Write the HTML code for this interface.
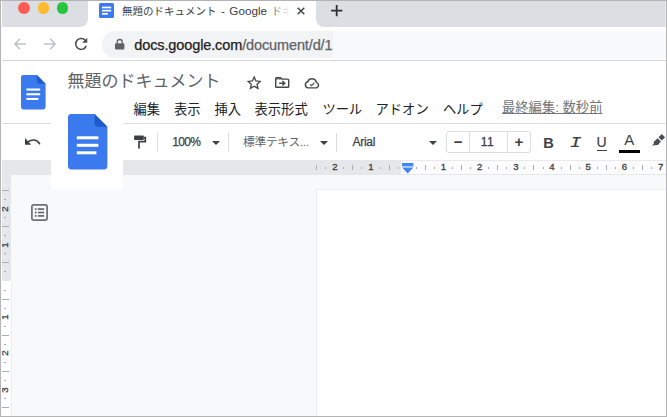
<!DOCTYPE html>
<html lang="ja">
<head>
<meta charset="utf-8">
<title>無題のドキュメント - Google ドキュメント</title>
<style>
*{box-sizing:border-box;margin:0;padding:0}
html,body{width:667px;height:417px;overflow:hidden;background:#fff}
body{font-family:"Liberation Sans","Noto Sans CJK JP",sans-serif;position:relative;color:#202124}
.abs{position:absolute}
svg{position:absolute;overflow:visible}
#frame{position:absolute;left:0;top:0;width:667px;height:417px;border:1px solid #b4b4b4;z-index:50;pointer-events:none}
#frameL{left:1px;top:1px;width:1.2px;height:415px;background:#fff;z-index:49}
#frameR{left:665px;top:1px;width:1px;height:415px;background:rgba(255,255,255,.35);z-index:49}
#tabL{left:0;top:0;width:88.2px;height:27px;background:#dbdee3;border-radius:0 0 8px 0}
#tabR{left:316.3px;top:0;width:351px;height:27px;background:#dbdee3;border-radius:0 0 0 8px}
.light{width:11.8px;height:11.8px;border-radius:50%;top:1.8px}
#tabtitle span{font-size:11.7px;word-spacing:1.2px}
#tabtitle{left:122px;top:2.5px;font-size:10.5px;line-height:16px;color:#3c4043;white-space:nowrap;width:168px;overflow:hidden}
#tabfade{left:268px;top:2px;width:22px;height:17px;background:linear-gradient(90deg,rgba(255,255,255,0),#fff)}
#omni{left:102px;top:30.8px;width:230.5px;height:26.8px;background:#f1f3f4;border-radius:13.5px 0 0 13.5px}
#omni2{left:332.5px;top:30.8px;width:335px;height:26.8px;background:#f8f9fa}
#url{left:134.3px;top:35.7px;font-size:14.5px;letter-spacing:-0.12px;line-height:18px;white-space:nowrap;color:#202124;-webkit-text-stroke:0.25px #202124}
#url span{color:#5f6368;-webkit-text-stroke:0.25px #5f6368}
#navline{left:0;top:60.3px;width:667px;height:1px;background:#d3d4d6}
#title{left:67.6px;top:68.9px;font-size:17px;line-height:26px;color:#5f6368;white-space:nowrap}
.menu{top:100px;font-size:13.3px;line-height:20px;white-space:nowrap;color:#202124}
#lastedit{left:502px;top:98.2px;font-size:13.3px;line-height:20px;color:#70757a;text-decoration:underline;white-space:nowrap}
#hdrline{left:0;top:122.6px;width:667px;height:1px;background:#dcdddf}
.tb{top:133px;font-size:12px;line-height:18px;white-space:nowrap;color:#3c4043}
.sep{top:133px;width:1px;height:19px;background:#dadce0}
.caret{width:0;height:0;border-left:4px solid transparent;border-right:4px solid transparent;border-top:4px solid #3c4043;top:141.4px}
#sizebox{left:445.8px;top:131.4px;width:84.8px;height:21.7px;border:1px solid #dadce0;border-radius:3px}
#canvas{left:0;top:160px;width:667px;height:257px;background:#f8f9fa}
#hrulerL{left:0;top:160px;width:401px;height:14.5px;background:#e5e7eb}
#hrulerR{left:401px;top:160px;width:266px;height:14.5px;background:#fcfcfd;border-top:1px solid #e9eaec;border-bottom:1px solid #e6e7e9}
#vrulerT{left:0;top:174px;width:11.4px;height:107px;background:#e5e7eb}
#vrulerB{left:0;top:281px;width:11.4px;height:136px;background:#fff}
#vline{left:11.4px;top:281px;width:1px;height:136px;background:#eceef0}
.rn{font-size:9.6px;line-height:10px;color:#3c4043;-webkit-text-stroke:0.3px #3c4043;width:12px;text-align:center;top:162.1px}
.vn{font-size:9.6px;line-height:10px;color:#3c4043;-webkit-text-stroke:0.3px #3c4043;width:12px;height:10px;text-align:center;left:-0.8px;transform:rotate(-90deg)}

.ht{top:164.5px;width:1px;height:5.4px;background:#a8adb3}
.hd{top:166.6px;width:1px;height:2px;background:#a8adb3}
.vt{left:2.3px;width:6.4px;height:1px;background:#a8adb3}
.vd{left:4.3px;width:2px;height:1px;background:#a8adb3}
#page{left:315.8px;top:188.5px;width:352px;height:229px;background:#fff;border-left:1.2px solid #eceef0;border-top:1.2px solid #eceef0}
#overlay{left:50.6px;top:100px;width:72.8px;height:88.8px;background:#fff}
</style>
</head>
<body>
<!-- browser tab strip -->
<div id="tabL" class="abs"></div>
<div id="tabR" class="abs"></div>
<div class="abs light" style="left:18.4px;background:#fd5c56"></div>
<div class="abs light" style="left:37.7px;background:#fdbb2d"></div>
<div class="abs light" style="left:56.6px;background:#27c43f"></div>
<svg style="left:99px;top:3px" width="15" height="15" viewBox="0 0 15 15"><rect width="15" height="15" rx="1.6" fill="#3a79ee"/><rect x="3" y="3.6" width="9.2" height="1.7" fill="#fff"/><rect x="3" y="6.8" width="9.2" height="1.7" fill="#fff"/><rect x="3" y="10" width="6" height="1.7" fill="#fff"/></svg>
<div id="tabtitle" class="abs">無題のドキュメント<span> - Google </span>ドキュメント</div>
<div id="tabfade" class="abs"></div>
<svg style="left:296.5px;top:6.5px" width="8" height="8" viewBox="0 0 8 8"><path d="M0.7 0.7L7.3 7.3M7.3 0.7L0.7 7.3" stroke="#3c4043" stroke-width="1.4" fill="none"/></svg>
<svg style="left:331.2px;top:5px" width="11.4" height="11.4" viewBox="0 0 11.4 11.4"><path d="M5.7 0.1V11.3M0.1 5.7H11.3" stroke="#2f3337" stroke-width="1.8" fill="none"/></svg>
<!-- nav bar -->
<svg style="left:13.7px;top:38px" width="12" height="12" viewBox="0 0 12 12"><path d="M11.8 6H1.2M6 0.8L0.9 6L6 11.2" stroke="#bdc1c6" stroke-width="1.4" fill="none"/></svg>
<svg style="left:43.8px;top:38px" width="12" height="12" viewBox="0 0 12 12"><path d="M0.2 6H10.8M6 0.8L11.1 6L6 11.2" stroke="#bdc1c6" stroke-width="1.4" fill="none"/></svg>
<svg style="left:73.8px;top:37.3px" width="14.4" height="13.4" viewBox="0 0 14 13"><path d="M11.6 4.2A5.3 5.3 0 1 0 11.9 8.6" stroke="#4a4d51" stroke-width="1.5" fill="none"/><path d="M12.9 0.6V5.6H7.9Z" fill="#4a4d51"/></svg>
<div id="omni" class="abs"></div>
<div id="omni2" class="abs"></div>
<svg style="left:115px;top:39px" width="9.4" height="10.4" viewBox="0 0 9.4 10.4"><rect x="0" y="4.2" width="9.4" height="6.2" rx="0.9" fill="#5f6368"/><path d="M2.2 4.6V3A2.5 2.5 0 0 1 7.2 3V4.6" stroke="#5f6368" stroke-width="1.3" fill="none"/></svg>
<div id="url" class="abs">docs.google.com<span>/document/d/1</span></div>
<div id="navline" class="abs"></div>
<!-- docs header -->
<svg style="left:20.7px;top:75.2px" width="24.6" height="34.4" viewBox="0 0 24.6 34.4"><path d="M2.3 0H15.9L24.6 8.7V32.1A2.3 2.3 0 0 1 22.3 34.4H2.3A2.3 2.3 0 0 1 0 32.1V2.3A2.3 2.3 0 0 1 2.3 0Z" fill="#3a79ee"/><path d="M15.9 0L24.6 8.7H17.9A2 2 0 0 1 15.9 6.7Z" fill="#1f5bcb"/><rect x="5.4" y="13.5" width="13.8" height="2.1" fill="#fff"/><rect x="5.4" y="18.2" width="13.8" height="2.1" fill="#fff"/><rect x="5.4" y="22.9" width="12" height="2.1" fill="#fff"/></svg>
<div id="title" class="abs">無題のドキュメント</div>
<svg style="left:247px;top:75.7px" width="14.4" height="13.1" viewBox="0 0 24 22.8"><path d="M12 1.8L15.1 8.6L22.4 9.4L17 14.4L18.5 21.6L12 17.9L5.5 21.6L7 14.4L1.6 9.4L8.9 8.6Z" stroke="#444746" stroke-width="2.3" fill="none" stroke-linejoin="miter"/></svg>
<svg style="left:275px;top:76.5px" width="14.4" height="11" viewBox="0 0 14.4 11"><path d="M1.6 0.7H5.4L6.8 2.1H12.8A0.9 0.9 0 0 1 13.7 3V9.4A0.9 0.9 0 0 1 12.8 10.3H1.6A0.9 0.9 0 0 1 0.7 9.4V1.6A0.9 0.9 0 0 1 1.6 0.7Z" stroke="#444746" stroke-width="1.45" fill="none"/><path d="M0.7 1.4H5.8V2.4H0.7Z" fill="#444746"/><path d="M4.2 6.2H9.4M7.4 3.9L9.8 6.2L7.4 8.5" stroke="#444746" stroke-width="1.45" fill="none"/></svg>
<svg style="left:303.5px;top:77.5px" width="16.2" height="10.6" viewBox="0 0 15.6 10.4"><path d="M4 9.7A3.1 3.1 0 0 1 3.6 3.6A4.4 4.4 0 0 1 12 4.3A2.8 2.8 0 0 1 12.2 9.7Z" stroke="#444746" stroke-width="1.45" fill="none" stroke-linejoin="round"/><path d="M5.8 6.2L7.2 7.6L10 4.8" stroke="#444746" stroke-width="1.2" fill="none"/></svg>
<div class="abs menu" style="left:133.5px">編集</div>
<div class="abs menu" style="left:174px">表示</div>
<div class="abs menu" style="left:214.5px">挿入</div>
<div class="abs menu" style="left:254.5px">表示形式</div>
<div class="abs menu" style="left:322.5px">ツール</div>
<div class="abs menu" style="left:375.5px">アドオン</div>
<div class="abs menu" style="left:443px">ヘルプ</div>
<div id="lastedit" class="abs">最終編集: 数秒前</div>
<div id="hdrline" class="abs"></div>
<!-- toolbar -->
<svg style="left:25px;top:138px" width="16" height="8" viewBox="0 0 16 8"><path d="M3 3.9C6.5 1.2 12 1.0 14.5 5.7" stroke="#3c4043" stroke-width="1.7" fill="none" stroke-linecap="round"/><path d="M0 0.1V6.8H6.1Z" fill="#3c4043"/></svg>
<svg style="left:134px;top:135px" width="13" height="14" viewBox="0 0 13 14"><rect x="0.1" y="0.5" width="9.7" height="4.4" rx="0.7" fill="#3c4043"/><path d="M9.8 2.5H11.3V6.6H5V13.5" stroke="#3c4043" stroke-width="1.7" fill="none"/></svg>
<div class="abs sep" style="left:157px"></div>
<div class="abs tb" style="left:172.3px;letter-spacing:-0.65px;-webkit-text-stroke:0.25px #3c4043">100%</div>
<div class="abs caret" style="left:212px"></div>
<div class="abs sep" style="left:228px"></div>
<div class="abs tb" style="left:243px;color:#5f6368;font-size:11.7px;letter-spacing:-0.25px">標準テキス...</div>
<div class="abs caret" style="left:320px"></div>
<div class="abs sep" style="left:336px"></div>
<div class="abs tb" style="left:352.5px;letter-spacing:-0.3px;-webkit-text-stroke:0.25px #3c4043">Arial</div>
<div class="abs caret" style="left:428.7px"></div>
<div id="sizebox" class="abs"></div>
<div class="abs sep" style="left:468.6px;top:131.4px;height:21.7px"></div>
<div class="abs sep" style="left:507px;top:131.4px;height:21.7px"></div>
<div class="abs tb" style="left:447.7px;width:21px;text-align:center;font-size:15px;font-weight:bold;top:133px">−</div>
<div class="abs tb" style="left:469px;width:37px;text-align:center;letter-spacing:0.4px;-webkit-text-stroke:0.3px #3c4043">11</div>
<div class="abs tb" style="left:508px;width:22px;text-align:center;font-size:15px;font-weight:bold;top:132.5px">+</div>
<div class="abs tb" style="left:543.3px;font-size:14.6px;font-weight:bold;top:133.8px;letter-spacing:-1px">B</div>
<div class="abs tb" style="left:570.6px;font-size:15px;font-style:italic;font-family:'Liberation Mono',monospace;top:134.5px;transform:scaleX(1.3);-webkit-text-stroke:0.15px #3c4043">I</div>
<div class="abs tb" style="left:596.4px;font-size:14px;top:133.2px;-webkit-text-stroke:0.2px #3c4043">U</div>
<div class="abs" style="left:596.5px;top:149.7px;width:10.2px;height:1.4px;background:#3c4043"></div>
<div class="abs tb" style="left:624.3px;font-size:15px;top:131px;transform:scaleY(0.93)">A</div>
<div class="abs" style="left:619.2px;top:149.8px;width:20.8px;height:3px;background:#000"></div>
<svg style="left:650px;top:132px" width="17" height="16" viewBox="0 0 17 16"><path d="M11.8 2L15.1 5.3L11.8 8.6L8.5 5.3Z" fill="#4a4d52"/><path d="M7.6 6.3L10.9 9.6L8 12.9L4.3 13.3L2 13.8L3.9 11.6L3.6 10Z" fill="#4a4d52"/></svg>
<!-- canvas + rulers -->
<div id="canvas" class="abs"></div>
<div id="hrulerL" class="abs"></div>
<div id="hrulerR" class="abs"></div>
<div id="vrulerT" class="abs"></div>
<div id="vrulerB" class="abs"></div>
<div id="vline" class="abs"></div>
<div id="ticks">
<div class="abs ht" style="left:316.2px"></div>
<div class="abs hd" style="left:325.2px"></div>
<div class="abs rn" style="left:328.8px">2</div>
<div class="abs hd" style="left:343.3px"></div>
<div class="abs ht" style="left:352.4px"></div>
<div class="abs hd" style="left:361.4px"></div>
<div class="abs rn" style="left:365.0px">1</div>
<div class="abs hd" style="left:379.6px"></div>
<div class="abs ht" style="left:388.6px"></div>
<div class="abs hd" style="left:397.6px"></div>
<div class="abs hd" style="left:415.8px"></div>
<div class="abs ht" style="left:424.8px"></div>
<div class="abs hd" style="left:433.8px"></div>
<div class="abs rn" style="left:437.4px">1</div>
<div class="abs hd" style="left:451.9px"></div>
<div class="abs ht" style="left:461.0px"></div>
<div class="abs hd" style="left:470.1px"></div>
<div class="abs rn" style="left:473.6px">2</div>
<div class="abs hd" style="left:488.1px"></div>
<div class="abs ht" style="left:497.2px"></div>
<div class="abs hd" style="left:506.2px"></div>
<div class="abs rn" style="left:509.8px">3</div>
<div class="abs hd" style="left:524.4px"></div>
<div class="abs ht" style="left:533.4px"></div>
<div class="abs hd" style="left:542.5px"></div>
<div class="abs rn" style="left:546.0px">4</div>
<div class="abs hd" style="left:560.5px"></div>
<div class="abs ht" style="left:569.6px"></div>
<div class="abs hd" style="left:578.6px"></div>
<div class="abs rn" style="left:582.2px">5</div>
<div class="abs hd" style="left:596.8px"></div>
<div class="abs ht" style="left:605.8px"></div>
<div class="abs hd" style="left:614.9px"></div>
<div class="abs rn" style="left:618.4px">6</div>
<div class="abs hd" style="left:633.0px"></div>
<div class="abs ht" style="left:642.0px"></div>
<div class="abs hd" style="left:651.0px"></div>
<div class="abs rn" style="left:654.6px">7</div>
<div class="abs vt" style="top:190.0px"></div>
<div class="abs vd" style="top:199.1px"></div>
<div class="abs vn" style="top:203.6px">2</div>
<div class="abs vd" style="top:217.1px"></div>
<div class="abs vt" style="top:226.2px"></div>
<div class="abs vd" style="top:235.2px"></div>
<div class="abs vn" style="top:239.8px">1</div>
<div class="abs vd" style="top:253.3px"></div>
<div class="abs vt" style="top:262.4px"></div>
<div class="abs vd" style="top:271.4px"></div>
<div class="abs vd" style="top:289.6px"></div>
<div class="abs vt" style="top:298.6px"></div>
<div class="abs vd" style="top:307.6px"></div>
<div class="abs vn" style="top:312.2px">1</div>
<div class="abs vd" style="top:325.8px"></div>
<div class="abs vt" style="top:334.8px"></div>
<div class="abs vd" style="top:343.9px"></div>
<div class="abs vn" style="top:348.4px">2</div>
<div class="abs vd" style="top:361.9px"></div>
<div class="abs vt" style="top:371.0px"></div>
<div class="abs vd" style="top:380.1px"></div>
<div class="abs vn" style="top:384.6px">3</div>
<div class="abs vd" style="top:398.1px"></div>
<div class="abs vt" style="top:407.2px"></div>
<div class="abs vd" style="top:416.2px"></div>
</div><!--endticks-->
<div id="page" class="abs"></div>
<svg style="left:402px;top:163px" width="11.4" height="10.6" viewBox="0 0 11.4 10.6"><rect x="0" y="0" width="11.4" height="3.4" fill="#4285f4"/><path d="M0 4.4H11.4L5.7 10.4Z" fill="#4285f4"/></svg>
<svg style="left:31px;top:204px" width="17" height="17" viewBox="0 0 17 17"><rect x="0.9" y="0.9" width="15.2" height="15.2" rx="2" stroke="#6c7075" stroke-width="1.7" fill="none"/><g fill="#6c7075"><rect x="3.8" y="4.2" width="1.8" height="1.8"/><rect x="6.8" y="4.2" width="6.4" height="1.8"/><rect x="3.8" y="7.6" width="1.8" height="1.8"/><rect x="6.8" y="7.6" width="6.4" height="1.8"/><rect x="3.8" y="11" width="1.8" height="1.8"/><rect x="6.8" y="11" width="6.4" height="1.8"/></g></svg>
<!-- large docs icon overlay -->
<div id="overlay" class="abs"></div>
<svg style="left:68.3px;top:114.3px" width="39.4" height="55.4" viewBox="0 0 39.4 55.4"><path d="M3.4 0H26.6L39.4 12.8V52A3.4 3.4 0 0 1 36 55.4H3.4A3.4 3.4 0 0 1 0 52V3.4A3.4 3.4 0 0 1 3.4 0Z" fill="#3a79ee"/><path d="M26.6 0L39.4 12.8H29.8A3.2 3.2 0 0 1 26.6 9.6Z" fill="#1f5bcb"/><rect x="8.8" y="22.3" width="21.6" height="3" fill="#fff"/><rect x="8.8" y="29.8" width="21.6" height="3" fill="#fff"/><rect x="8.8" y="37.3" width="19.6" height="3" fill="#fff"/></svg>
<div id="frameL" class="abs"></div>
<div id="frameR" class="abs"></div>
<div id="frame"></div>
</body>
</html>
